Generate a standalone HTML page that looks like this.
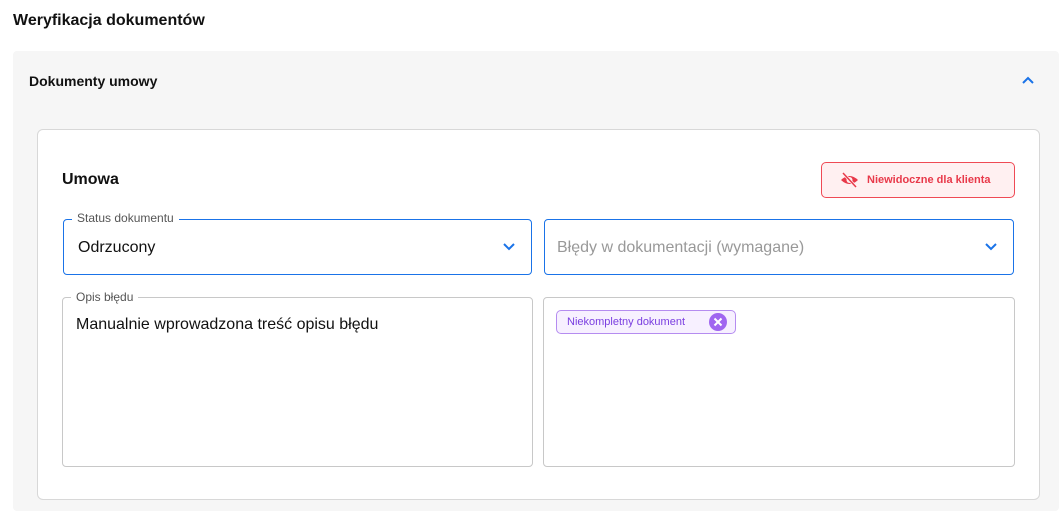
<!DOCTYPE html>
<html><head><meta charset="utf-8"><style>
*{box-sizing:border-box;margin:0;padding:0}
body{width:1059px;height:504px;overflow:hidden;background:#fff;font-family:"Liberation Sans",sans-serif;color:#111;position:relative}
.a{position:absolute}
</style></head><body>
<div class="a" style="left:13px;top:12px;font-size:16px;font-weight:bold">Weryfikacja dokumentów</div>
<div class="a" style="left:13px;top:51px;width:1046px;height:460px;background:#f6f6f6;border-radius:4px"></div>
<div class="a" style="left:29px;top:73px;font-size:14px;font-weight:bold">Dokumenty umowy</div>
<svg class="a" style="left:1021px;top:76px" width="14" height="10"><path d="M2 7 L7 2 L12 7" stroke="#1a73e8" stroke-width="2" fill="none"/></svg>
<div class="a" style="left:37px;top:129px;width:1003px;height:371px;background:#fff;border:1px solid #d8d8d8;border-radius:6px"></div>
<div class="a" style="left:62px;top:171px;font-size:16px;font-weight:bold">Umowa</div>
<div class="a" style="left:821px;top:162px;width:194px;height:36px;background:#fff0f1;border:1px solid #ef4a55;border-radius:5px;color:#e8394a;font-size:11px;font-weight:bold;padding-left:45px;line-height:34px">Niewidoczne dla klienta</div>
<svg class="a" style="left:840px;top:172px" width="19" height="16" viewBox="0 0 19 16"><path d="M1 8 Q9.5 0 18 8 Q9.5 16 1 8Z" fill="#e8394a"/><circle cx="9.5" cy="8" r="3" fill="#fff0f1"/><path d="M3 1 L16 15" stroke="#fff0f1" stroke-width="3"/><path d="M3 1 L16 15" stroke="#e8394a" stroke-width="1.5"/></svg>
<div class="a" style="left:63px;top:219px;width:469px;height:56px;border:1px solid #1a73e8;border-radius:4px"></div>
<div class="a" style="left:72px;top:211px;background:#fff;padding:0 5px;font-size:12px;color:#555">Status dokumentu</div>
<div class="a" style="left:78px;top:239px;font-size:16px">Odrzucony</div>
<svg class="a" style="left:502px;top:242px" width="14" height="10"><path d="M2 2 L7 7 L12 2" stroke="#1a73e8" stroke-width="2" fill="none"/></svg>
<div class="a" style="left:544px;top:219px;width:470px;height:56px;border:1px solid #1a73e8;border-radius:4px"></div>
<div class="a" style="left:557px;top:239px;font-size:16px;color:#999">Błędy w dokumentacji (wymagane)</div>
<svg class="a" style="left:984px;top:242px" width="14" height="10"><path d="M2 2 L7 7 L12 2" stroke="#1a73e8" stroke-width="2" fill="none"/></svg>
<div class="a" style="left:62px;top:297px;width:471px;height:170px;border:1px solid #c8c8c8;border-radius:4px"></div>
<div class="a" style="left:71px;top:290px;background:#fff;padding:0 5px;font-size:12px;color:#555">Opis błędu</div>
<div class="a" style="left:76px;top:316px;font-size:16px">Manualnie wprowadzona treść opisu błędu</div>
<div class="a" style="left:543px;top:297px;width:472px;height:170px;border:1px solid #c8c8c8;border-radius:4px"></div>
<div class="a" style="left:556px;top:310px;width:180px;height:24px;background:#f7f0ff;border:1px solid #b58cf0;border-radius:5px;color:#7a3ee0;font-size:11px;line-height:22px;padding-left:10px">Niekompletny dokument</div>
<svg class="a" style="left:709px;top:313px" width="18" height="18"><circle cx="9" cy="9" r="9" fill="#a066f0"/><path d="M5.5 5.5 L12.5 12.5 M12.5 5.5 L5.5 12.5" stroke="#fff" stroke-width="2"/></svg>
</body></html>
